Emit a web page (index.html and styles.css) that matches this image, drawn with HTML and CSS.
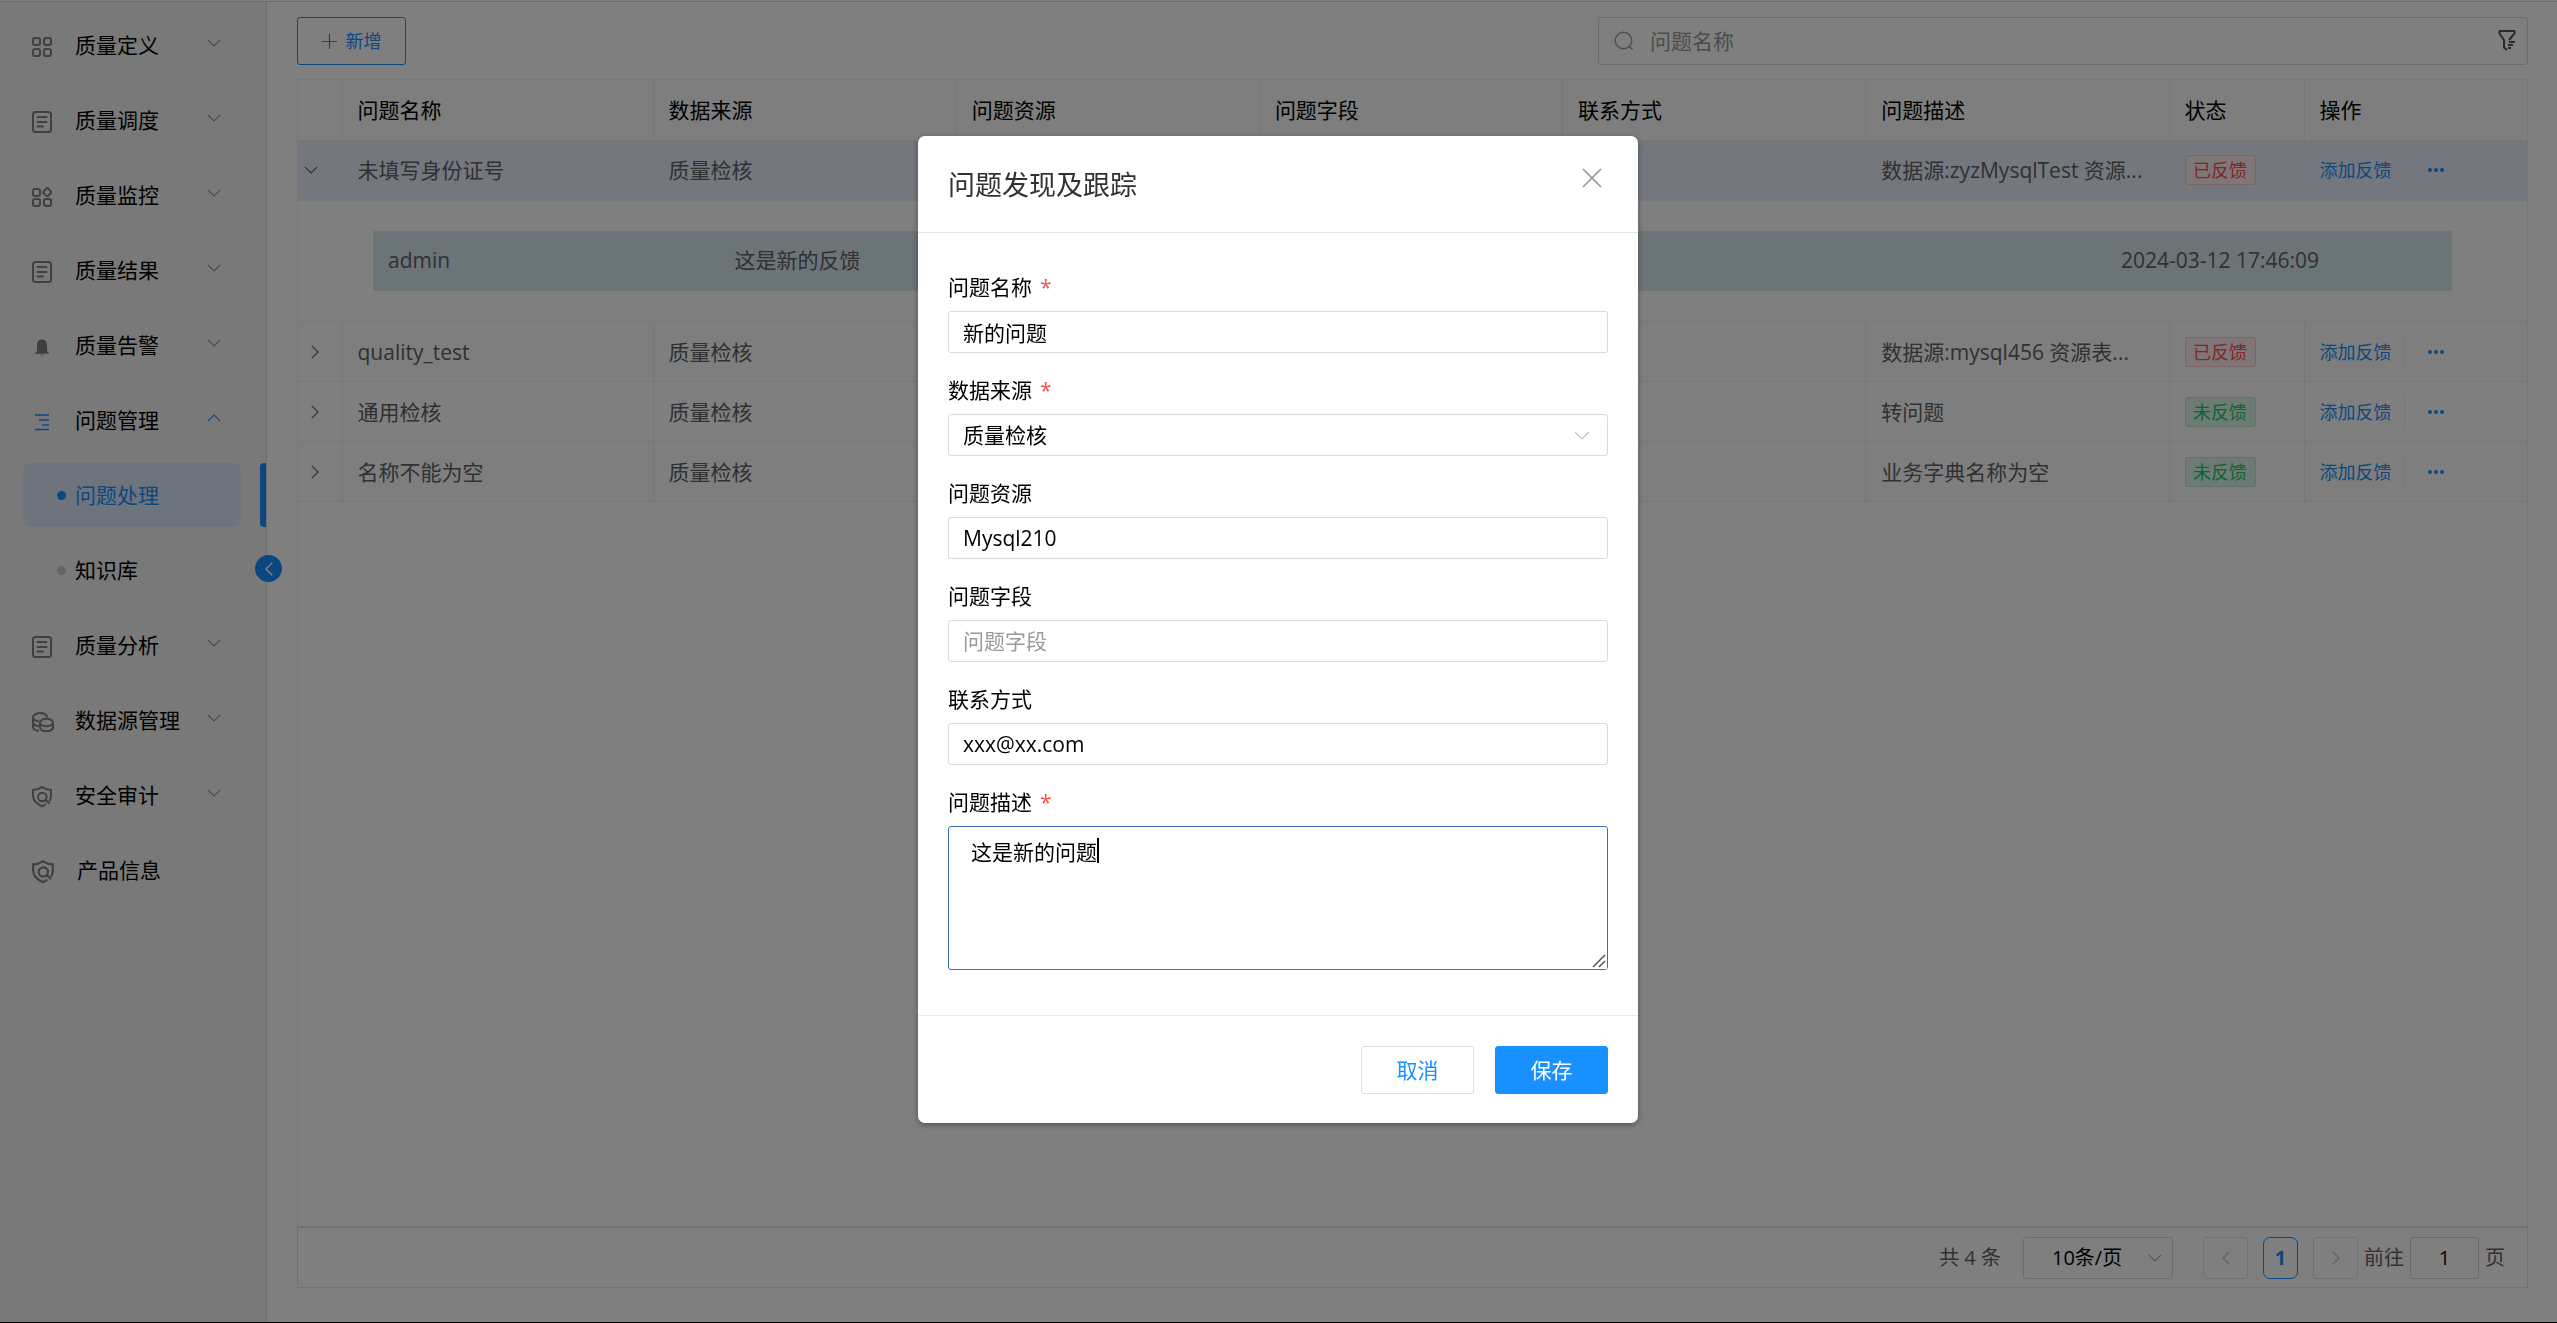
FILE: index.html
```html
<!DOCTYPE html>
<html lang="zh-CN">
<head>
<meta charset="utf-8">
<title>问题处理</title>
<link rel="stylesheet" href="styles.css">
</head>
<body>
<svg class="sprite" aria-hidden="true">
  <symbol id="i-grid" viewBox="0 0 20 20"><g fill="none" stroke="currentColor" stroke-width="2"><rect x="1" y="1" width="7" height="7" rx="2"/><rect x="12" y="1" width="7" height="7" rx="2"/><rect x="1" y="12" width="7" height="7" rx="2"/><rect x="12" y="12" width="7" height="7" rx="2"/></g></symbol>
  <symbol id="i-apps" viewBox="0 0 20 20"><g fill="none" stroke="currentColor" stroke-width="2"><rect x="1" y="2" width="7" height="7" rx="2"/><rect x="12" y="2" width="6.4" height="6.4" rx="1.2" transform="rotate(45 15.2 5.2)"/><rect x="1" y="12" width="7" height="7" rx="2"/><rect x="12" y="12" width="7" height="7" rx="2"/></g></symbol>
  <symbol id="i-doc" viewBox="0 0 20 22"><g fill="none" stroke="currentColor" stroke-width="2" stroke-linecap="round"><rect x="1" y="1" width="18" height="20" rx="2.5"/><path d="M5.5 6h9M5.500 11h9M5.500 15.500h5.500"/></g></symbol>
  <symbol id="i-bell" viewBox="0 0 20 20"><path fill="currentColor" d="M10 2.500C6.500 2.500 5 5 5 8v6L3 16v.8h14V16l-2-2V8c0-3-1.500-5.500-5-5.500zM8.500 17.500h3c-.2.700-.8 1-1.500 1s-1.300-.3-1.500-1z"/></symbol>
  <symbol id="i-list" viewBox="0 0 20 20"><path d="M3 3h14M7 8h10M10 13h7M3 17.500h14" fill="none" stroke="currentColor" stroke-width="1.600"/></symbol>
  <symbol id="i-db" viewBox="0 0 22 20"><g fill="none" stroke="currentColor" stroke-width="2" stroke-linecap="round"><path d="M15 4.500C14 2.500 11.500 1 8.300 1 4.300 1 1 3 1 5.300V15c0 1.800 2 3.300 5 3.800M1 6c.5 1.800 2.500 2.800 5 3.200M1 11c.5 1.500 2.300 2.600 5 3"/><ellipse cx="14.500" cy="10.500" rx="6.500" ry="3.800"/><path d="M8 11v4.500c0 2 2.900 3.600 6.500 3.600s6.500-1.600 6.500-3.600V11"/></g></symbol>
  <symbol id="i-shield" viewBox="0 0 20 22"><g fill="none" stroke="currentColor" stroke-width="2" stroke-linecap="round"><path d="M17.800 14.500c.8-1.500 1.200-3 1.200-4.700V4C16 4 12.800 3 10 1.200 7.200 3 4 4 1 4v5.800c0 4.900 4 8.200 9 10.600 1.200-.6 2.300-1.200 3.300-1.900"/><circle cx="10.300" cy="11" r="4.300"/><path d="M13.600 14l3.300 3"/></g></symbol>
  <symbol id="i-down" viewBox="0 0 14 8"><path d="M.8.8L7 7 13.200.8" fill="none" stroke="currentColor" stroke-width="1.200"/></symbol>
  <symbol id="i-up" viewBox="0 0 14 8"><path d="M.8 7.200L7 1l6.200 6.200" fill="none" stroke="currentColor" stroke-width="1.200"/></symbol>
  <symbol id="i-right" viewBox="0 0 8 14"><path d="M.8.8L7 7 .8 13.200" fill="none" stroke="currentColor" stroke-width="1.200"/></symbol>
  <symbol id="i-left" viewBox="0 0 8 14"><path d="M7.200.8L1 7l6.200 6.200" fill="none" stroke="currentColor" stroke-width="1.500"/></symbol>
  <symbol id="i-more" viewBox="0 0 16 4"><g fill="currentColor"><circle cx="2" cy="2" r="2"/><circle cx="8" cy="2" r="2"/><circle cx="14" cy="2" r="2"/></g></symbol>
</svg>

<div class="app">
  <aside class="side">
    <nav class="menu">
      <button class="item"><svg class="ico"><use href="#i-grid"/></svg><span>质量定义</span><svg class="arr"><use href="#i-down"/></svg></button>
      <button class="item"><svg class="ico tall"><use href="#i-doc"/></svg><span>质量调度</span><svg class="arr"><use href="#i-down"/></svg></button>
      <button class="item"><svg class="ico"><use href="#i-apps"/></svg><span>质量监控</span><svg class="arr"><use href="#i-down"/></svg></button>
      <button class="item"><svg class="ico tall"><use href="#i-doc"/></svg><span>质量结果</span><svg class="arr"><use href="#i-down"/></svg></button>
      <button class="item"><svg class="ico"><use href="#i-bell"/></svg><span>质量告警</span><svg class="arr"><use href="#i-down"/></svg></button>
      <button class="item open"><svg class="ico"><use href="#i-list"/></svg><span>问题管理</span><svg class="arr"><use href="#i-up"/></svg></button>
      <a class="item sub active" href="#handle"><i class="dot"></i><span>问题处理</span></a>
      <a class="item sub" href="#knowledge"><i class="dot"></i><span>知识库</span></a>
      <button class="item"><svg class="ico tall"><use href="#i-doc"/></svg><span>质量分析</span><svg class="arr"><use href="#i-down"/></svg></button>
      <button class="item"><svg class="ico wide"><use href="#i-db"/></svg><span>数据源管理</span><svg class="arr"><use href="#i-down"/></svg></button>
      <button class="item"><svg class="ico tall"><use href="#i-shield"/></svg><span>安全审计</span><svg class="arr"><use href="#i-down"/></svg></button>
      <a class="item" href="#about"><svg class="ico large"><use href="#i-shield"/></svg><span>产品信息</span></a>
    </nav>
    <button class="fold" aria-label="收起菜单"><svg width="8" height="14"><use href="#i-left"/></svg></button>
  </aside>

  <main class="main">
    <div class="bar">
      <button class="add"><svg width="15" height="15" viewBox="0 0 15 15"><path d="M7.500 0v15M0 7.500h15" stroke="currentColor" stroke-width="1.200"/></svg>新增</button>
      <label class="search">
        <svg class="lens" width="20" height="20" viewBox="0 0 20 20" fill="none" stroke="currentColor" stroke-width="1.400"><circle cx="9.500" cy="9.500" r="8.300"/><path d="M15 15l3.500 3.500"/></svg>
        <input type="text" placeholder="问题名称" aria-label="问题名称">
        <svg class="filter" width="20" height="22" viewBox="0 0 20 22" fill="none" stroke="currentColor" stroke-width="2" stroke-linejoin="round"><path d="M12 11l5.500-6.500V2h-15v2.500L7 11v7.500l3 2.500M12 13h6M11 16h5M11 19h3"/></svg>
      </label>
    </div>

    <div class="grid">
      <table class="list">
        <colgroup><col class="c-x"><col class="c-n"><col><col><col><col><col><col class="c-s"><col class="c-o"></colgroup>
        <thead><tr><th></th><th>问题名称</th><th>数据来源</th><th>问题资源</th><th>问题字段</th><th>联系方式</th><th>问题描述</th><th>状态</th><th>操作</th></tr></thead>
        <tbody>
          <tr class="current"><td class="x"><button aria-label="收起"><svg width="14" height="8"><use href="#i-down"/></svg></button></td><td>未填写身份证号</td><td>质量检核</td><td></td><td></td><td></td><td>数据源:zyzMysqlTest 资源...</td><td><span class="tag red">已反馈</span></td><td><div class="ops"><a href="#feedback">添加反馈</a><button aria-label="更多"><svg width="16" height="4"><use href="#i-more"/></svg></button></div></td></tr>
          <tr class="detail"><td colspan="9">
            <table class="inner"><colgroup><col class="c-u"><col><col class="c-t"></colgroup><tbody><tr><td>admin</td><td>这是新的反馈</td><td>2024-03-12 17:46:09</td></tr></tbody></table>
          </td></tr>
          <tr class="odd"><td class="x"><button aria-label="展开"><svg width="8" height="14"><use href="#i-right"/></svg></button></td><td>quality_test</td><td>质量检核</td><td></td><td></td><td></td><td>数据源:mysql456 资源表...</td><td><span class="tag red">已反馈</span></td><td><div class="ops"><a href="#feedback">添加反馈</a><button aria-label="更多"><svg width="16" height="4"><use href="#i-more"/></svg></button></div></td></tr>
          <tr><td class="x"><button aria-label="展开"><svg width="8" height="14"><use href="#i-right"/></svg></button></td><td>通用检核</td><td>质量检核</td><td></td><td></td><td></td><td>转问题</td><td><span class="tag green">未反馈</span></td><td><div class="ops"><a href="#feedback">添加反馈</a><button aria-label="更多"><svg width="16" height="4"><use href="#i-more"/></svg></button></div></td></tr>
          <tr class="odd"><td class="x"><button aria-label="展开"><svg width="8" height="14"><use href="#i-right"/></svg></button></td><td>名称不能为空</td><td>质量检核</td><td></td><td></td><td></td><td>业务字典名称为空</td><td><span class="tag green">未反馈</span></td><td><div class="ops"><a href="#feedback">添加反馈</a><button aria-label="更多"><svg width="16" height="4"><use href="#i-more"/></svg></button></div></td></tr>
        </tbody>
      </table>
    </div>

    <footer class="pager">
      <span>共 4 条</span>
      <div class="size"><select aria-label="每页条数"><option>10条/页</option></select><svg width="14" height="8"><use href="#i-down"/></svg></div>
      <div class="pages">
        <button class="step" aria-label="上一页"><svg width="8" height="14"><use href="#i-left"/></svg></button>
        <button class="num">1</button>
        <button class="step" aria-label="下一页"><svg width="8" height="14"><use href="#i-right"/></svg></button>
      </div>
      <label class="jump"><span>前往</span><input type="text" value="1"><span>页</span></label>
    </footer>
  </main>
</div>

<div class="mask">
  <form class="dialog" role="dialog" aria-labelledby="dlg-title">
    <header class="head">
      <h2 id="dlg-title">问题发现及跟踪</h2>
      <button type="button" class="close" aria-label="关闭"><svg width="20" height="20" viewBox="0 0 20 20"><path d="M1 1l18 18M19 1L1 19" stroke="currentColor" stroke-width="1.600"/></svg></button>
    </header>
    <div class="body">
      <div class="field"><label for="f-name">问题名称<em>*</em></label><input id="f-name" type="text" value="新的问题"></div>
      <div class="field"><label for="f-src">数据来源<em>*</em></label><div class="pick"><select id="f-src"><option>质量检核</option></select><svg width="16" height="9" viewBox="0 0 14 8"><use href="#i-down"/></svg></div></div>
      <div class="field"><label for="f-res">问题资源</label><input id="f-res" type="text" value="Mysql210"></div>
      <div class="field"><label for="f-col">问题字段</label><input id="f-col" type="text" placeholder="问题字段"></div>
      <div class="field"><label for="f-tel">联系方式</label><input id="f-tel" type="text" value="xxx@xx.com"></div>
      <div class="field"><label for="f-desc">问题描述<em>*</em></label><div class="area"><textarea id="f-desc">这是新的问题</textarea><i class="caret"></i><svg class="grip" width="16" height="16" viewBox="0 0 16 16"><path d="M2 14L14 2M8 14l6-6" stroke="#555" stroke-width="1.500"/></svg></div></div>
    </div>
    <footer class="foot">
      <button type="button" class="btn">取消</button>
      <button type="button" class="btn primary">保存</button>
    </footer>
  </form>
</div>
</body>
</html>
```
FILE: styles.css
```css
* { box-sizing: border-box; }
body {
  margin: 0;
  background: #fff;
  color: #000;
  font: 300 21px/30px "Noto Sans CJK SC", sans-serif;
  font-family: "Open Sans", "Noto Sans CJK SC", sans-serif;
  font-weight: 400;
}
button, input, select, textarea { font: inherit; color: inherit; margin: 0; }
button { background: none; border: 0; padding: 0; cursor: pointer; }
a { color: inherit; text-decoration: none; }
svg { display: block; flex: none; }
.sprite { position: absolute; width: 0; height: 0; }

.app {
  display: flex;
  min-height: 100vh;
  padding-top: 1px;
  border-bottom: 1px solid #000;
}

/* Sidebar */
.side {
  position: relative;
  flex: none;
  width: 267px;
  padding-top: 11px;
  background: #f3f3f3;
  border-top: 1px solid #d4d4d4;
  border-right: 1px solid #dcdcdc;
}
.menu { display: flex; flex-direction: column; gap: 11px; }
.item {
  display: flex;
  align-items: center;
  height: 64px;
  margin: 0 25px 0 23px;
  padding: 0 20px 0 9px;
  border-radius: 8px;
  text-align: left;
}
.item span { flex: 1; white-space: nowrap; }
.ico { width: 20px; height: 20px; margin: 3px 23px 0 0; color: #808080; }
.ico.tall { height: 22px; }
.ico.wide { width: 22px; margin-right: 21px; }
.ico.large { width: 22px; height: 24px; }
.arr { width: 14px; height: 8px; margin-bottom: 4px; color: #909399; }
.open .ico, .open .arr { color: #1890ff; }
.sub { padding-left: 34px; }
.dot { width: 9px; height: 9px; margin-right: 9px; border-radius: 50%; background: #c8c9cc; }
.active { position: relative; background: #dde8fb; color: #1890ff; }
.active .dot { background: #1890ff; }
.active::after {
  content: "";
  position: absolute;
  right: -25px;
  top: 0;
  width: 6px;
  height: 100%;
  border-radius: 4px 0 0 4px;
  background: #1890ff;
}
.fold {
  position: absolute;
  right: -16px;
  top: 553px;
  display: grid;
  place-items: center;
  width: 27px;
  height: 27px;
  border-radius: 50%;
  background: #1890ff;
  color: #fff;
}

/* Main column */
.main {
  flex: 1;
  min-width: 0;
  display: flex;
  flex-direction: column;
  padding: 15px 29px 34px 30px;
  border-top: 1px solid #d4d4d4;
}
.bar { display: flex; justify-content: space-between; margin-bottom: 14px; }
.add {
  display: flex;
  align-items: center;
  justify-content: center;
  gap: 9px;
  width: 109px;
  height: 48px;
  border: 1px solid #1890ff;
  border-radius: 3px;
  color: #1890ff;
  font-size: 18px;
}
.search {
  display: flex;
  align-items: center;
  width: 930px;
  height: 48px;
  padding: 0 10px 0 15px;
  border: 1px solid #d9d9d9;
  border-radius: 3px;
  color: #999;
}
.search input { flex: 1; height: 30px; padding: 0; margin-left: 16px; border: 0; outline: 0; background: none; }
.search input::placeholder { color: #999; opacity: 1; }
.filter { color: #555; margin-bottom: 2px; }

.grid { flex: 1; border: 1px solid #ebeef5; border-bottom: 0; }
.list { width: 100%; table-layout: fixed; border-collapse: collapse; color: #606266; }
.c-x { width: 44px; }
.c-n { width: 311px; }
.c-s { width: 135px; }
.c-o { width: 223px; }
th, td { height: 60px; padding: 0 15px; font-weight: 400; text-align: left; white-space: nowrap; overflow: hidden; }
th { color: #000; }
.list > thead th, .list > tbody > tr > td { border-right: 1px solid #ebeef5; border-bottom: 1px solid #ebeef5; }
.list > thead th:last-child, .list > tbody > tr > td:last-child { border-right: 0; }
.list > thead th, .odd { background: #fdfdfd; }
.current { background: #e8effa; }
.list > tbody > .current > td { border-right-color: #e8effa; }
.x button { display: grid; place-items: center; width: 14px; height: 30px; }
.list .x { padding: 0 0 0 10px; }
.list .current .x { padding-left: 6px; }
.list .detail > td { padding: 30px 75px; }
.inner { width: 100%; table-layout: fixed; border-collapse: collapse; background: #d6e8ec; }
.c-u { width: 346px; }
.c-t { width: 346px; }
.inner td { border-right: 1px solid #e3eef2; border-bottom: 1px solid #e3eef2; }
.tag {
  display: block;
  width: 71px;
  height: 30px;
  border: 1px solid;
  border-radius: 3px;
  font-size: 18px;
  line-height: 28px;
  text-align: center;
}
.red { background: #ffedee; border-color: #ffc7c7; color: #ff4d4f; }
.green { background: #dcf5e8; border-color: #bfe8d0; color: #13ce66; }
.ops { display: flex; align-items: center; color: #1890ff; font-size: 18px; }
.ops a { padding-right: 12px; border-right: 1px solid #e6ebf0; }
.current .ops a { border-color: transparent; }
.ops button { margin-left: 23px; }

/* Pagination */
.pager {
  display: flex;
  align-items: center;
  justify-content: flex-end;
  height: 62px;
  padding-right: 22px;
  border: 1px solid #e0e3ea;
  border-top-width: 2px;
  color: #606266;
  font-size: 20px;
}
.size { position: relative; width: 150px; margin: 0 30px 0 22px; color: #000; }
.size select { width: 100%; height: 42px; padding: 0 0 0 28px; }
.size svg, .pick svg { position: absolute; right: 11px; top: 17px; color: #a8abb2; pointer-events: none; }
.pages { display: flex; gap: 15px; }
.step { display: grid; place-items: center; width: 45px; height: 42px; border: 1px solid #dfe2ea; border-radius: 3px; color: #c0c4cc; }
.num { width: 35px; height: 42px; border: 1px solid #1890ff; border-radius: 7px; color: #1890ff; font-weight: 700; }
.jump { display: flex; align-items: center; gap: 6px; margin-left: 6px; }
.jump input { width: 69px; height: 42px; padding: 0; color: #000; text-align: center; }
.size select, .jump input, .field input, .pick select, textarea {
  border: 1px solid #d9d9d9;
  border-radius: 3px;
  outline: 0;
  background: #fff;
  appearance: none;
}

/* Dialog */
.mask { position: fixed; inset: 0; padding-right: 1px; background: rgba(0, 0, 0, 0.5); overflow: auto; }
.dialog {
  width: 720px;
  margin: 136px auto 30px;
  border-radius: 7px;
  background: #fff;
  box-shadow: 0 2px 6px rgba(0, 0, 0, 0.35);
}
.head { display: flex; justify-content: space-between; height: 97px; padding: 32px 36px 0 30px; border-bottom: 1px solid #e4e4e4; }
.head h2 { margin: 0; color: #303133; font-size: 27px; line-height: 34px; font-weight: 400; }
.close { height: 20px; color: #909399; }
.body { display: flex; flex-direction: column; gap: 22px; padding: 39px 30px 45px; }
.field { display: flex; flex-direction: column; gap: 9px; }
.field em { margin-left: 8px; color: #ff4d4f; font-style: normal; }
.field input, .pick select { width: 100%; height: 42px; padding: 0 14px; }
.field input::placeholder { color: #999; opacity: 1; }
.pick { position: relative; }
.pick svg { right: 18px; color: #c0c4cc; }
.area { position: relative; }
.area textarea { display: block; width: 100%; height: 144px; padding: 10px 22px; border-color: #3b6db8; resize: vertical; }
.caret { position: absolute; left: 149px; top: 12px; width: 2px; height: 25px; background: #000; }
.grip { position: absolute; right: 1px; bottom: 1px; background: #fff; pointer-events: none; }
.foot { display: flex; justify-content: flex-end; gap: 21px; padding: 30px 30px 29px; border-top: 1px solid #ebebeb; }
.btn { width: 113px; height: 48px; border: 1px solid #dcdfe6; border-radius: 3px; color: #1890ff; }
.primary { border-color: #1890ff; background: #1890ff; color: #fff; }
```
